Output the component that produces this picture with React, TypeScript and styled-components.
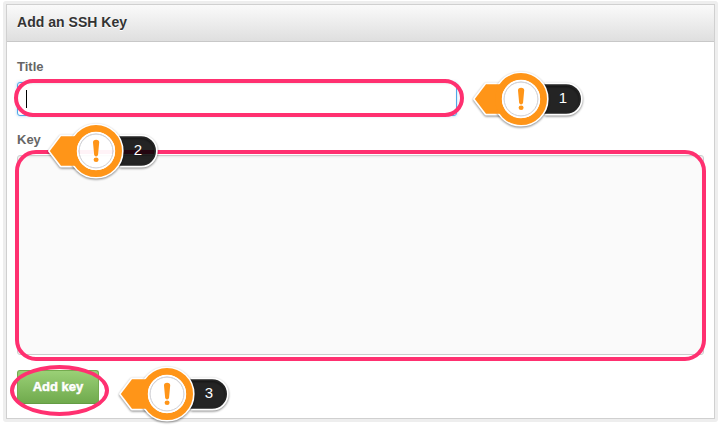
import React from "react";
import styled, { createGlobalStyle } from "styled-components";

const PageStyle = createGlobalStyle`
  *, *::before, *::after { box-sizing: border-box; }
  html, body { margin: 0; background: #fff; }
  body { font-family: "Liberation Sans", Arial, sans-serif; overflow: hidden; }
`;

const Page = styled.main`
  display: flex;
  width: 719px;
  height: 426px;
  padding: 1px 1px 4px 3px;
`;

const Frame = styled.section`
  display: flex;
  flex: 1;
  padding: 3px;
  background: #eee;
  border-radius: 3px;
`;

const Panel = styled.div`
  display: flex;
  flex-direction: column;
  flex: 1;
  border: 1px solid #d0d0d0;
  background: #fff;
`;

const Header = styled.h1`
  margin: 0;
  height: 37px;
  padding: 0 10px;
  border-bottom: 1px solid #c8c8c8;
  background: linear-gradient(#fafafa, #dfdfdf);
  color: #333;
  font-size: 14px;
  line-height: 34px;
  font-weight: bold;
  letter-spacing: 0.03px;
  text-shadow: 0 1px 0 #fff;
`;

const Form = styled.form`
  display: flex;
  flex-direction: column;
  align-items: flex-start;
  gap: 15px;
  padding: 17px 10px 0;
`;

const Field = styled.div`
  display: flex;
  flex-direction: column;
  gap: 7px;

  & + & {
    margin-top: 1px;
  }
`;

const Label = styled.label`
  color: #666;
  font-size: 13px;
  line-height: 16px;
  font-weight: bold;
`;

const Annotated = styled.div`
  position: relative;
  display: flex;
`;

const TextInput = styled.div`
  display: flex;
  align-items: center;
  width: 440px;
  height: 34px;
  padding: 0 8px;
  border: 1px solid #51a7e8;
  border-radius: 3px;
  background: #fff;
  box-shadow: inset 0 1px 2px rgba(0, 0, 0, 0.08), 0 0 3px rgba(81, 167, 232, 0.5);
`;

const Caret = styled.span`
  width: 1px;
  height: 18px;
  background: #000;
`;

const KeyArea = styled.div`
  width: 687px;
  height: 200px;
  border: 1px solid #ccc;
  border-radius: 3px;
  background: #fafafa;
  box-shadow: inset 0 1px 2px rgba(0, 0, 0, 0.08);
`;

const SubmitButton = styled.button`
  width: 82px;
  height: 34px;
  padding: 0 0 1px;
  border: 1px solid #74ab4f;
  border-bottom-color: #649c44;
  border-radius: 3px;
  background: linear-gradient(#9ad076, #70aa4d);
  color: #fff;
  font: bold 13px/31px "Liberation Sans", Arial, sans-serif;
  text-shadow: 0 -1px 0 rgba(0, 0, 0, 0.15);
  -webkit-text-stroke: 0.5px #fff;
`;

const Outline = styled.div<{ $inset: string; $radius: string }>`
  position: absolute;
  inset: ${(p) => p.$inset};
  border: 4px solid #ff3070;
  border-radius: ${(p) => p.$radius};
  pointer-events: none;
`;

const MarkerBox = styled.div<{ $x: number; $y: number }>`
  position: absolute;
  left: ${(p) => p.$x}px;
  top: ${(p) => p.$y}px;
  display: grid;
  width: 120px;
  height: 64px;
  z-index: 1;

  > * {
    grid-area: 1 / 1;
  }
`;

const Raised = styled.g`
  filter: drop-shadow(0 1px 1.2px rgba(0, 0, 0, 0.48));
`;

const MarkerNumber = styled.span`
  z-index: 1;
  padding: 21px 16px 0 84px;
  color: #fff;
  font-size: 15px;
  line-height: 20px;
  text-align: center;
`;

function Marker({ x, y, value }: { x: number; y: number; value: number }) {
  return (
    <MarkerBox $x={x} $y={y}>
      <svg width="120" height="64" viewBox="0 0 120 64" aria-hidden="true">
        <Raised fill="none" stroke="#fff" strokeWidth="3.4" strokeLinejoin="round">
          <path d="M76 17.2H97.2a14.8 14.8 0 0 1 0 29.6H76" />
          <path d="M32 17.2H17L5.8 32 17 46.8H32" />
        </Raised>
        <path
          d="M74 17.2H97.2a14.8 14.8 0 0 1 0 29.6H74Q80 32 74 17.2Z"
          fill="#000"
          fillOpacity="0.86"
        />
        <Raised>
          <circle cx="52" cy="32" r="22.8" fill="none" stroke="#fff" strokeWidth="9.6" />
        </Raised>
        <path d="M5.8 32 17 17.2H32V46.8H17Z" fill="#ff9518" />
        <circle cx="52" cy="32" r="22.5" fill="none" stroke="#ff9518" strokeWidth="7" />
        <circle cx="52" cy="32" r="17" fill="#fff" fillOpacity="0.94" />
        <circle cx="52" cy="32" r="18.2" fill="none" stroke="#fff" strokeWidth="2" />
        <circle cx="52" cy="32" r="16.9" fill="none" stroke="#cfcfd4" strokeWidth="1" />
        <path
          d="M49 23.6Q49 20.8 52.1 20.8T55.2 23.6L54.1 35.2Q53.8 37.4 52.1 37.4T50.1 35.2Z"
          fill="#ff9518"
        />
        <ellipse cx="52.1" cy="40.8" rx="2.5" ry="2.2" fill="#ff9518" />
      </svg>
      <MarkerNumber>{value}</MarkerNumber>
    </MarkerBox>
  );
}

export default function App() {
  return (
    <>
      <PageStyle />
      <Page>
        <Frame>
          <Panel>
            <Header>Add an SSH Key</Header>
            <Form>
              <Field>
                <Label>Title</Label>
                <Annotated>
                  <TextInput role="textbox">
                    <Caret />
                  </TextInput>
                  <Outline $inset="-3px -7px -1px -3px" $radius="19px" />
                  <Marker x={452} y={-15.5} value={1} />
                </Annotated>
              </Field>
              <Field>
                <Label>Key</Label>
                <Annotated>
                  <KeyArea role="textbox" />
                  <Outline $inset="-5px -2px -6px -2px" $radius="21px" />
                  <Marker x={27} y={-35.6} value={2} />
                </Annotated>
              </Field>
              <Annotated>
                <SubmitButton type="button">Add key</SubmitButton>
                <Outline $inset="-5px -10px -12px -7px" $radius="50%" />
                <Marker x={98} y={-7.7} value={3} />
              </Annotated>
            </Form>
          </Panel>
        </Frame>
      </Page>
    </>
  );
}
